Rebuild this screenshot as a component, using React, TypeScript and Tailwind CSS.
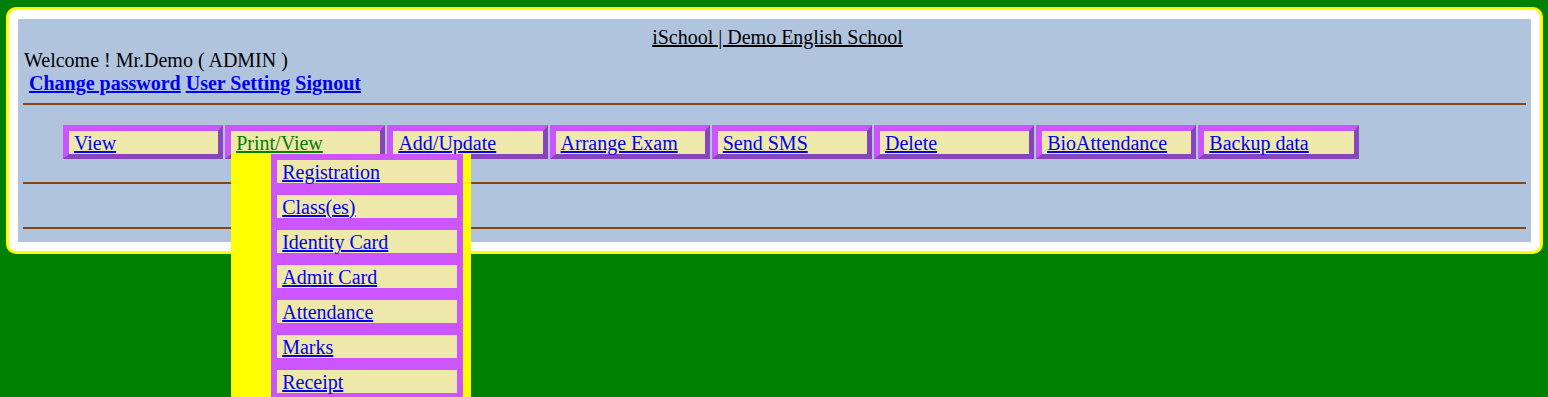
import React from 'react';

const menu = ['View', 'Print/View', 'Add/Update', 'Arrange Exam', 'Send SMS', 'Delete', 'BioAttendance', 'Backup data'];
const printItems = ['Registration', 'Class(es)', 'Identity Card', 'Admit Card', 'Attendance', 'Marks', 'Receipt'];

function App() {
  return (
    <div className="h-[397px] overflow-hidden bg-[#008000] pt-[7px] pl-[6px] pr-[5px] font-['Liberation_Serif',serif] text-[20px] leading-[23px] text-black">
      <div className="rounded-[10px] border-[3px] border-[#ffff00] bg-white p-[9px]">
        <div className="bg-[#b0c4de] px-[5px] pt-[7px] pb-[13px]">
          <div className="pl-[6px] text-center">
            <a href="#" className="text-black underline">iSchool | Demo English School</a>
          </div>
          <div className="pl-[1px]">Welcome ! Mr.Demo ( ADMIN )</div>
          <div className="pl-[6px] font-bold">
            <a href="#" className="text-[#0000ee] underline">Change password</a>{' '}
            <a href="#" className="text-[#0000ee] underline">User Setting</a>{' '}
            <a href="#" className="text-[#0000ee] underline">Signout</a>
          </div>

          <div className="mt-[8px] h-[2px] bg-[#8b4513]" />

          <ul className="mt-[20px] flex gap-[2px] pl-[40px]">
            {menu.map((m) => (
              <li
                key={m}
                className="relative h-[34px] w-[160.2px] border-t-[6px] border-l-[6px] border-b-[5px] border-r-[5px] border-t-[#cc55ff] border-l-[#cc55ff] border-b-[#8844bb] border-r-[#8844bb] bg-[#eee8aa] pt-[1px] pl-[5px] leading-[22px]"
              >
                <a href="#" className={m === 'Print/View' ? 'text-[#008000] underline' : 'text-[#0000ee] underline'}>
                  {m}
                </a>
                {m === 'Print/View' && (
                  <ul className="absolute left-0 top-[23px] z-10 w-[240px] bg-[#ffff00] pl-[40px] pr-[8px] pb-[20px]">
                    {printItems.map((p) => (
                      <li key={p} className="h-[35px] border-[6px] border-[#cc55ff] bg-[#eee8aa] pt-[1px] pl-[5px] leading-[22px]">
                        <a href="#" className="text-[#0000ee] underline">{p}</a>
                      </li>
                    ))}
                  </ul>
                )}
              </li>
            ))}
          </ul>

          <div className="mt-[23px] h-[2px] bg-[#8b4513]" />
          <div className="mt-[43px] h-[2px] bg-[#8b4513]" />
        </div>
      </div>
    </div>
  );
}

export default App;
